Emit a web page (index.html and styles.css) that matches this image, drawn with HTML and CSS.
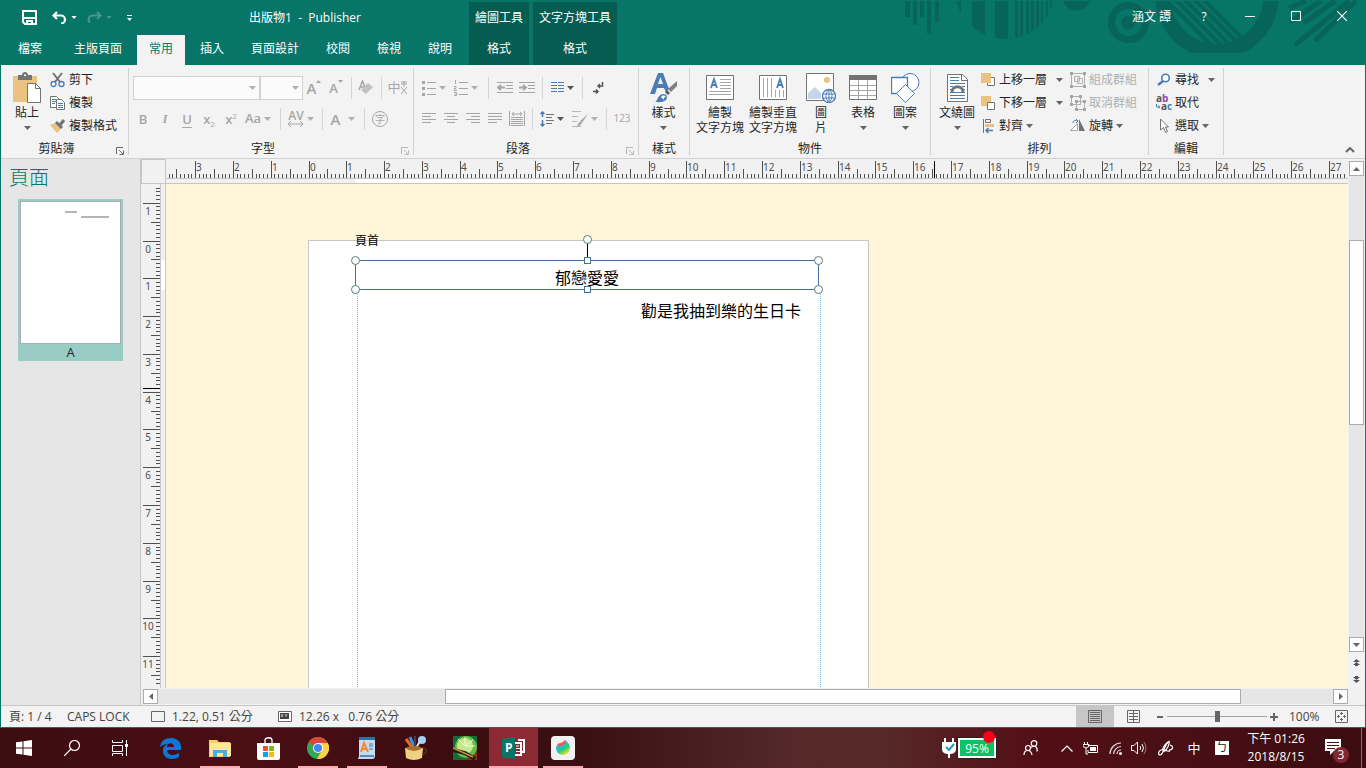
FILE: index.html
```html
<!DOCTYPE html>
<html lang="zh-Hant">
<head>
<meta charset="utf-8">
<title>出版物1 - Publisher</title>
<link rel="stylesheet" href="styles.css">
</head>
<body>
<svg class="defs" aria-hidden="true">
  <symbol id="caret" viewBox="0 0 7 4"><path d="M0 0h7L3.500 4z" fill="currentColor"/></symbol>
  <symbol id="launcher" viewBox="0 0 8 8"><path d="M.5 7V.5H7M3 3l4 4M7.500 3.500v4h-4" fill="none" stroke="currentColor"/></symbol>
</svg>
<div class="window">
  <header class="header">
    <svg class="pattern" viewBox="0 0 506 65" width="506" height="65" aria-hidden="true">
      <clipPath id="disc"><circle cx="146" cy="-11" r="50"/></clipPath>
      <clipPath id="bowl"><circle cx="358" cy="-3" r="47"/></clipPath>
      <clipPath id="flat"><rect x="290" y="1" width="140" height="52"/></clipPath>
      <path d="M46 1h5v16h-5zM54 1h4v24h-4zM61 1h4v16h-4zM68 1h4v33h-4zM76 1h4v21h-4z"/>
      <g clip-path="url(#disc)"><path d="M90 1h12v40H90zM113 1h13v40h-13zM136 1h13v40h-13zM156 1h3v40h-3zM161 1h3v40h-3zM167 1h3v40h-3zM172 1h3v40h-3zM177 1h3v40h-3zM182 1h2v40h-2zM187 1h2v40h-2zM191 1h2v40h-2zM195 1h2v40h-2z"/></g>
      <path d="M204 1a14 13 0 0 0 27 0z"/>
      <circle cx="269.500" cy="22.500" r="17" fill="none" stroke="#07645a" stroke-width="7"/><circle cx="269.500" cy="22.500" r="7"/>
      <g clip-path="url(#flat)"><circle cx="358" cy="-3" r="54" fill="none" stroke="#07645a" stroke-width="15"/>
      <g clip-path="url(#bowl)" stroke="#07645a" stroke-width="4"><path d="M307 0l55 55M317 0l55 55M326 0l55 55M336 0l55 55M345 0l50 50"/></g></g>
      <path d="M447 1L430 8M462 1L431 22M476 1L445 23M490 1L436 45M497 1L456 41" fill="none" stroke="#07645a" stroke-width="5"/>
    </svg>
    <div class="header-main">
      <div class="title-row">
        <div class="quick">
          <button aria-label="儲存"><svg width="15" height="15" viewBox="0 0 15 15"><path d="M1 1h13v13H3l-2-2zM1 8h13M5 14v-3h5v3" fill="none" stroke="#fff" stroke-width="2"/></svg></button>
          <button aria-label="復原"><svg width="15" height="13" viewBox="0 0 15 13"><path d="M5 1L1.500 4.500 5 8M2 4.500h7a4 4 0 0 1 0 8" fill="none" stroke="#fff" stroke-width="2.200"/></svg><svg class="caret"><use href="#caret"/></svg></button>
          <button class="faded" aria-label="重做"><svg width="15" height="13" viewBox="0 0 15 13"><path d="M10 1l3.500 3.500L10 8M13 4.500H6a4 4 0 0 0-3 7" fill="none" stroke="#fff" stroke-width="2"/></svg><svg class="caret"><use href="#caret"/></svg></button>
          <button aria-label="自訂快速存取"><svg width="5" height="6" viewBox="0 0 5 6"><path d="M0 0h5v1H0zM0 3h5L2.500 6z" fill="#fff"/></svg></button>
        </div>
        <h1 class="title">出版物1 &nbsp;- &nbsp;Publisher</h1>
      </div>
      <nav class="tabs">
        <button class="tab file">檔案</button><button class="tab">主版頁面</button><button class="tab active">常用</button><button class="tab">插入</button><button class="tab">頁面設計</button><button class="tab">校閱</button><button class="tab">檢視</button><button class="tab">說明</button>
      </nav>
    </div>
    <div class="context"><span>繪圖工具</span><button class="tab">格式</button></div>
    <div class="context wide"><span>文字方塊工具</span><button class="tab">格式</button></div>
    <div class="controls">
      <span class="user">涵文 譚</span>
      <button aria-label="說明">?</button>
      <button aria-label="最小化"><svg width="10" height="10"><path d="M0 5.500h10" stroke="#fff"/></svg></button>
      <button aria-label="最大化"><svg width="10" height="10"><path d="M.5.500h9v9h-9z" fill="none" stroke="#fff"/></svg></button>
      <button aria-label="關閉"><svg width="10" height="10"><path d="M0 0l10 10M10 0L0 10" stroke="#fff" stroke-width="1.200"/></svg></button>
    </div>
  </header>

  <section class="ribbon">
    <div class="group g-clip">
      <div class="group-body">
        <button class="big">
          <span class="pic"><svg width="28" height="32" viewBox="0 0 28 32"><path d="M0 4h24v26H0z" fill="#eac282"/><path d="M5 3h4c0-4 6-4 6 0h4v5H5z" fill="#737373"/><path d="M11 2.500h2v1.500h-2z" fill="#fff"/><path d="M14.500 11.500h8l5 5v14h-13z" fill="#fff" stroke="#737373"/><path d="M22.500 11.500v5h5" fill="none" stroke="#737373"/></svg></span>
          <span>貼上</span><svg class="caret"><use href="#caret"/></svg>
        </button>
        <div class="stack">
          <button><svg width="16" height="16" viewBox="0 0 16 16"><path d="M3 1l7 9M12 1L5 10" stroke="#737373" stroke-width="2"/><circle cx="3.500" cy="12" r="2.500" fill="none" stroke="#4a7db5" stroke-width="1.300"/><circle cx="11.500" cy="12" r="2.500" fill="none" stroke="#4a7db5" stroke-width="1.300"/></svg>剪下</button>
          <button><svg width="16" height="16" viewBox="0 0 16 16"><path d="M.5 1.500h6l2 2v9h-8z" fill="#fff" stroke="#737373"/><path d="M2 4.500h4M2 6.500h4M2 8.500h3" stroke="#4a7db5"/><path d="M6.500 4.500h5l3 3v7h-8z" fill="#fff" stroke="#737373"/><path d="M8 8.500h5M8 10.500h5M8 12.500h5" stroke="#4a7db5"/></svg>複製</button>
          <button><svg width="16" height="16" viewBox="0 0 16 16"><path d="M0 7l5-2 6 6-4 4z" fill="#eac282"/><path d="M6 4l6 6M10 7l4-5" stroke="#737373" stroke-width="3"/></svg>複製格式</button>
        </div>
      </div>
      <div class="group-label">剪貼簿<button class="launch" aria-label="剪貼簿設定"><svg width="8" height="8"><use href="#launcher"/></svg></button></div>
    </div>

    <div class="group g-font off">
      <div class="tools">
        <div class="row">
          <span class="combo font"><select aria-label="字型" disabled><option></option></select><svg class="caret"><use href="#caret"/></svg></span><span class="combo size"><select aria-label="字型大小" disabled><option></option></select><svg class="caret"><use href="#caret"/></svg></span>
          <button class="t22" aria-label="放大字型"><span class="l15">A</span><svg class="sup" width="5" height="3"><path d="M0 3h5L2.500 0z" fill="#a6a6a6"/></svg></button>
          <button class="t22" aria-label="縮小字型"><span class="l13">A</span><svg class="sup" width="5" height="3"><path d="M0 0h5L2.500 3z" fill="#a6a6a6"/></svg></button>
          <i class="bar"></i>
          <button class="t22" aria-label="清除格式"><svg width="16" height="16" viewBox="0 0 16 16"><path d="M1 10L4.500 1 8 10M2.500 7h4" fill="none" stroke="#a6a6a6" stroke-width="1.500"/><path d="M10 3l5 4-7 7-5-4z" fill="#c2c0c4"/></svg></button>
          <i class="bar"></i>
          <button class="t24" aria-label="中文版面配置"><span class="l12">中</span><svg width="6" height="14" viewBox="0 0 6 14"><path d="M0 1h6M0 3h6M3 0v6M0 6l6 7M6 6l-6 7" stroke="#a6a6a6" fill="none"/></svg></button>
        </div>
        <div class="row">
          <button class="t22 l13">B</button><button class="t22 l13 italic">I</button><button class="t22 l13 under">U</button>
          <button class="t22 l13">x<small class="sub">2</small></button><button class="t22 l13">x<small class="top">2</small></button>
          <button class="t32"><span class="aa">Aa</span><svg class="caret"><use href="#caret"/></svg></button>
          <i class="bar wide"></i>
          <button class="t30" aria-label="字元間距"><span class="av">AV<svg width="15" height="6" viewBox="0 0 15 6"><path d="M0 3h15M3 0L0 3l3 3M12 0l3 3-3 3" fill="none" stroke="#a6a6a6"/></svg></span><svg class="caret"><use href="#caret"/></svg></button>
          <i class="bar wide"></i>
          <button class="t30 spread" aria-label="字型色彩"><span class="l15">A</span><svg class="caret"><use href="#caret"/></svg></button>
          <i class="bar wide"></i>
          <button class="t20" aria-label="圍繞字元"><span class="ring">字</span></button>
        </div>
      </div>
      <div class="group-label">字型<button class="launch" aria-label="字型設定"><svg width="8" height="8"><use href="#launcher"/></svg></button></div>
    </div>

    <div class="group g-para off">
      <div class="tools">
        <div class="row">
          <button class="t32" aria-label="項目符號"><svg width="14" height="16" viewBox="0 0 14 16"><path d="M5 2.500h9M5 8.500h9M5 14.500h9" stroke="#a6a6a6"/><path d="M0 1h3v3H0zM0 7h3v3H0zM0 13h3v3H0z" fill="#a6a6a6"/></svg><svg class="caret"><use href="#caret"/></svg></button>
          <button class="t32" aria-label="編號"><svg width="14" height="16" viewBox="0 0 14 16"><path d="M5 2.500h9M5 8.500h9M5 14.500h9M1.500 0v4M0 6.500h2v2H.5v2H3M0 12.500h2.500v3H0M1 14h1" fill="none" stroke="#a6a6a6"/></svg><svg class="caret"><use href="#caret"/></svg></button>
          <i class="bar wide"></i>
          <button class="t22" aria-label="減少縮排"><svg width="16" height="12" viewBox="0 0 16 12"><path d="M0 .5h16M9 3.500h7M9 6.500h7M0 10.500h16" stroke="#a6a6a6"/><path d="M8 5.500H2M4 3L1 5.500 4 8" fill="none" stroke="#a6a6a6" stroke-width="2"/></svg></button>
          <button class="t22" aria-label="增加縮排"><svg width="16" height="12" viewBox="0 0 16 12"><path d="M0 .5h16M9 3.500h7M9 6.500h7M0 10.500h16" stroke="#a6a6a6"/><path d="M0 5.500h6M4 3l3 2.500L4 8" fill="none" stroke="#a6a6a6" stroke-width="2"/></svg></button>
          <i class="bar"></i>
          <button class="t32 on" aria-label="欄"><svg width="13" height="11" viewBox="0 0 13 11"><path d="M0 .5h6M7 .5h6M0 3.500h6M7 3.500h6M0 6.500h6M7 6.500h6M0 9.500h6M7 9.500h6" stroke="#4a7db5"/></svg><svg class="caret"><use href="#caret"/></svg></button>
          <i class="bar"></i>
          <button class="t24 on" aria-label="段落標記"><svg width="11" height="12" viewBox="0 0 11 12"><path d="M9.500 0v4H5M7 2L5 4l2 2M0 9.500h5M3 7.500l2 2-2 2" fill="none" stroke="#555" stroke-width="1.500"/></svg></button>
        </div>
        <div class="row">
          <button class="t22" aria-label="靠左"><svg width="14" height="11"><path d="M0 .5h14M0 3.500h9M0 6.500h14M0 9.500h9" stroke="#a6a6a6"/></svg></button>
          <button class="t22" aria-label="置中"><svg width="14" height="11"><path d="M0 .5h14M3 3.500h8M0 6.500h14M3 9.500h8" stroke="#a6a6a6"/></svg></button>
          <button class="t22" aria-label="靠右"><svg width="14" height="11"><path d="M0 .5h14M5 3.500h9M0 6.500h14M5 9.500h9" stroke="#a6a6a6"/></svg></button>
          <button class="t22" aria-label="左右對齊"><svg width="14" height="11"><path d="M0 .5h14M0 3.500h14M0 6.500h14M0 9.500h9" stroke="#a6a6a6"/></svg></button>
          <button class="t22" aria-label="分散對齊"><svg width="16" height="16" viewBox="0 0 16 16"><path d="M.5 0v15M15.500 0v15M2 6.500h12M2 8.500h12M2 10.500h12M2 12.500h12M2 14.500h12M3 3h10M5 1L3 3l2 2M11 1l2 2-2 2" fill="none" stroke="#a6a6a6"/></svg></button>
          <i class="bar"></i>
          <button class="t32 on" aria-label="行距"><svg width="14" height="16" viewBox="0 0 14 16"><path d="M2.500 1v5M.5 3l2-2 2 2M2.500 9v6M.5 13l2 2 2-2" fill="none" stroke="#4a7db5" stroke-width="1.500"/><path d="M6 3.500h8M6 6.500h6M6 9.500h8M6 12.500h6" stroke="#737373"/></svg><svg class="caret"><use href="#caret"/></svg></button>
          <button class="t34" aria-label="段落樣式"><svg width="16" height="16" viewBox="0 0 16 16"><path d="M0 .5h9M0 5.500h6M0 10.500h5M0 15.500h9" stroke="#b8b8b8"/><path d="M16 3l-6 9-2-2z" fill="#aaa"/><path d="M5 15c1 0 1-5 4-4 2 2-1 4-4 4z" fill="#aaa"/></svg><svg class="caret"><use href="#caret"/></svg></button>
          <i class="bar"></i>
          <button class="t24 num">123</button>
        </div>
      </div>
      <div class="group-label">段落<button class="launch" aria-label="段落設定"><svg width="8" height="8"><use href="#launcher"/></svg></button></div>
    </div>

    <div class="group g-style">
      <div class="group-body">
        <button class="big">
          <span class="pic"><svg width="28" height="30" viewBox="0 0 28 30"><path d="M0 21L8 0h5l6 16-3 3-2-4H7l-2 6zM8 11h5l-2.500-7z" fill="#4a7db5"/><path d="M27 8v5l-6 6-3-3z" fill="#808080"/><path d="M17 17l3 3-2 2-3-3z" fill="#555"/><path d="M5 29c3-1 2-7 8-8 4 0 5 3 3 6-3 3-8 2-11 2z" fill="#4a7db5"/><path d="M11 24c1-2 4-2 5 0-2 0-3 2-2 3" fill="#fff"/></svg></span>
          <span>樣式</span><svg class="caret"><use href="#caret"/></svg>
        </button>
      </div>
      <div class="group-label">樣式</div>
    </div>

    <div class="group g-obj">
      <div class="group-body">
        <button class="big w52"><span class="pic"><svg width="28" height="25" viewBox="0 0 28 25"><path d="M.5.500h27v24H.5z" fill="#fff" stroke="#737373"/><path d="M5 13L8 4l3 9M6 10h4" fill="none" stroke="#4a7db5" stroke-width="1.800"/><path d="M14 4.500h11M14 7.500h11M14 10.500h11M14 13.500h11M3 16.500h22M3 19.500h22" stroke="#a6a6a6"/></svg></span><span>繪製<br>文字方塊</span></button>
        <button class="big w54"><span class="pic"><svg width="28" height="25" viewBox="0 0 28 25"><path d="M.5.500h27v24H.5z" fill="#fff" stroke="#737373"/><path d="M18 13l3-9 3 9M19 10h4" fill="none" stroke="#4a7db5" stroke-width="1.800"/><path d="M4.500 3v19M8.500 3v19M12.500 3v19M16.500 15v7M20.500 15v7M24.500 15v7" stroke="#a6a6a6"/></svg></span><span>繪製垂直<br>文字方塊</span></button>
        <button class="big w42"><span class="pic"><svg width="30" height="30" viewBox="0 0 30 30"><path d="M.5.500h27v27H.5z" fill="#fff" stroke="#737373"/><circle cx="21" cy="7" r="3" fill="#eac282"/><path d="M2 26v-6l7-6 6 6v6z" fill="#c5d6ea"/><circle cx="23" cy="23" r="6.500" fill="#fff" stroke="#4a7db5" stroke-width="1.300"/><path d="M16 21h13M16 25h13M23 16v14M23 16c-4 4-4 9 0 14M23 16c4 4 4 9 0 14" fill="none" stroke="#4a7db5"/></svg></span><span>圖<br>片</span></button>
        <button class="big w42"><span class="pic"><svg width="28" height="25" viewBox="0 0 28 25"><path d="M.5.500h27v24H.5z" fill="#fff" stroke="#737373"/><path d="M0 0h28v5H0z" fill="#737373"/><path d="M1 10.500h26M1 15.500h26M1 20.500h26M9.500 5v19M18.500 5v19" stroke="#a6a6a6"/></svg></span><span>表格</span><svg class="caret"><use href="#caret"/></svg></button>
        <button class="big w42"><span class="pic"><svg width="29" height="30" viewBox="0 0 29 30"><circle cx="19" cy="9.500" r="9" fill="#fff" stroke="#4a7db5"/><path d="M.5 4.500h16v16H.5z" fill="#fff" stroke="#4a7db5" stroke-width="1.300"/><path d="M14.500 11.500l9 9-9 9-9-9z" fill="#fff" stroke="#4a7db5"/></svg></span><span>圖案</span><svg class="caret"><use href="#caret"/></svg></button>
      </div>
      <div class="group-label">物件</div>
    </div>

    <div class="group g-arr">
      <div class="group-body">
        <button class="big"><span class="pic"><svg width="21" height="28" viewBox="0 0 21 28"><path d="M.5.500h15l5 5v22H.5z" fill="#fff" stroke="#737373"/><path d="M14.500.500v6h6" fill="none" stroke="#737373"/><path d="M3 3.500h9M3 6.500h9M3 9.500h15M3 12.500h3M15 12.500h3M3 15.500h2M16 15.500h2M3 18.500h15M3 21.500h15M3 24.500h15" stroke="#4a7db5"/><path d="M5 18c0-7 11-7 11 0" fill="none" stroke="#737373" stroke-width="3"/></svg></span><span>文繞圖</span><svg class="caret"><use href="#caret"/></svg></button>
        <div class="stack w90">
          <button class="far"><svg width="16" height="16" viewBox="0 0 16 16"><path d="M7.500 5.500h7v8h-7z" fill="#fff" stroke="#737373"/><path d="M1 1h10v10H1z" fill="#eac282"/></svg>上移一層<svg class="caret"><use href="#caret"/></svg></button>
          <button class="far"><svg width="16" height="16" viewBox="0 0 16 16"><path d="M1 1h10v10H1z" fill="#eac282"/><path d="M7.500 7.500h7v7h-7z" fill="#fff" stroke="#737373"/></svg>下移一層<svg class="caret"><use href="#caret"/></svg></button>
          <button><svg width="16" height="16" viewBox="0 0 16 16"><path d="M3.500 1v14M5.500 1.500h5v3h-5z" fill="none" stroke="#737373"/><path d="M5 6h9v3H5z" fill="#eac282"/><path d="M13 12.500H6M8.500 10L6 12.500 8.500 15" fill="none" stroke="#4a7db5" stroke-width="1.500"/></svg>對齊<svg class="caret"><use href="#caret"/></svg></button>
        </div>
        <div class="stack">
          <button class="off" disabled><svg width="16" height="16" viewBox="0 0 16 16"><path d="M1.500 2v12.500h13V1.500H2M4.500 4.500h5v5h-5zM7.500 6.500h5v5h-5z" fill="none" stroke="#b0b0b0"/><path d="M0 0h3v3H0zM13 0h3v3h-3zM0 13h3v3H0zM13 13h3v3h-3z" fill="#a6a6a6"/></svg>組成群組</button>
          <button class="off" disabled><svg width="16" height="16" viewBox="0 0 16 16"><path d="M1.500 1.500h9v8h-9zM6.500 6.500h8v8h-8z" fill="none" stroke="#b0b0b0"/><path d="M0 0h3v3H0zM9 0h3v3H9zM0 8h3v3H0zM5 5h3v3H5zM13 5h3v3h-3zM5 13h3v3H5zM13 13h3v3h-3z" fill="#a6a6a6"/></svg>取消群組</button>
          <button><svg width="16" height="16" viewBox="0 0 16 16"><path d="M.5 12.500h7v-7z" fill="#fff" stroke="#a6a6a6"/><path d="M9 1v12h6z" fill="#737373"/><path d="M3 5c0-3 4-3 5-2M6 1l2 2-2 2" fill="none" stroke="#4a7db5"/></svg>旋轉<svg class="caret"><use href="#caret"/></svg></button>
        </div>
      </div>
      <div class="group-label">排列</div>
    </div>

    <div class="group g-edit">
      <div class="group-body">
        <div class="stack">
          <button class="far"><svg width="16" height="16" viewBox="0 0 16 16"><circle cx="9.500" cy="6" r="3.800" fill="#fff" stroke="#4a7db5" stroke-width="1.600"/><path d="M7 9l-5 4" stroke="#4a7db5" stroke-width="2.500"/></svg>尋找<svg class="caret"><use href="#caret"/></svg></button>
          <button><svg class="abac" width="16" height="16" viewBox="0 0 16 16"><text x="0" y="7">a<tspan fill="#8a4bab">b</tspan></text><text x="5" y="15">a<tspan fill="#4a7db5">c</tspan></text><path d="M.5 9v3H4M2.500 10.500L4 12l-1.500 1.500" fill="none" stroke="#4a7db5"/></svg>取代</button>
          <button><svg width="16" height="16" viewBox="0 0 16 16"><path d="M4.500 1v11l3-2.500 2 5 2-1-2-4.500h3z" fill="#fff" stroke="#737373"/></svg>選取<svg class="caret"><use href="#caret"/></svg></button>
        </div>
      </div>
      <div class="group-label">編輯</div>
    </div>
    <button class="collapse" aria-label="摺疊功能區"><svg width="10" height="6" viewBox="0 0 10 6"><path d="M1 5l4-4 4 4" fill="none" stroke="#666" stroke-width="2"/></svg></button>
  </section>

  <main class="work">
    <aside class="pages">
      <h2>頁面</h2>
      <button class="thumb"><span class="sheet"><i class="line short"></i><i class="line long"></i></span>A</button>
    </aside>
    <div class="editor">
      <div class="corner"></div>
      <svg class="ruler-h" id="rulerH" aria-label="水平尺規"></svg>
      <svg class="ruler-v" id="rulerV" aria-label="垂直尺規"></svg>
      <div class="canvas">
        <div class="paper"></div>
        <i class="guide left"></i><i class="guide right"></i>
        <span class="head-note">頁首</span>
        <div class="frame">郁戀愛愛
          <i class="stem"></i><i class="knob rot"></i><i class="knob tl"></i><i class="knob tr"></i><i class="knob bl"></i><i class="knob br"></i><i class="node up"></i><i class="node down"></i>
        </div>
        <div class="frame-text">勸是我抽到樂的生日卡</div>
      </div>
      <div class="vscroll">
        <button class="arrow" aria-label="向上"><svg width="7" height="4"><path d="M0 4h7L3.500 0z" fill="#666"/></svg></button>
        <div class="track"><i class="before"></i><i class="handle"></i><i class="after"></i></div>
        <button class="arrow" aria-label="向下"><svg width="7" height="4"><path d="M0 0h7L3.500 4z" fill="#666"/></svg></button>
        <button class="jump" aria-label="上一頁"><svg width="7" height="7"><path d="M0 3h7L3.500 0zM0 6h7L3.500 3zM2 6h3v1H2z" fill="#555"/></svg></button>
        <button class="jump" aria-label="下一頁"><svg width="7" height="7"><path d="M2 0h3v1H2zM0 1h7L3.500 4zM0 4h7L3.500 7z" fill="#555"/></svg></button>
      </div>
      <div class="hscroll">
        <button class="arrow" aria-label="向左"><svg width="4" height="7"><path d="M4 0v7L0 3.500z" fill="#666"/></svg></button>
        <div class="track"><i class="before"></i><i class="handle"></i><i class="after"></i></div>
        <button class="arrow" aria-label="向右"><svg width="4" height="7"><path d="M0 0v7l4-3.500z" fill="#666"/></svg></button>
      </div>
    </div>
  </main>

  <footer class="status">
    <span class="s-page">頁: 1 / 4</span><span class="s-caps">CAPS LOCK</span>
    <span class="s-pos"><svg width="14" height="11"><path d="M.5.500h13v10H.5z" fill="none" stroke="#666"/></svg>1.22, 0.51 公分</span>
    <span class="s-size"><svg width="14" height="11"><path d="M.5.500h13v10H.5z" fill="#fff" stroke="#666"/><path d="M2 2h9v6H2z" fill="#444"/><path d="M3 3l2 3M5 3L3 6M7 3l1 1.500L9.500 3M8 4v2" stroke="#ddd" stroke-width=".7" fill="none"/></svg>12.26 x &nbsp; 0.76 公分</span>
    <div class="views">
      <button class="view active" aria-label="單頁"><svg width="14" height="13"><path d="M.5.500h13v12H.5z" fill="none" stroke="#666"/><path d="M2 2.500h10M2 4.500h10M2 6.500h10M2 8.500h10M2 10.500h10" stroke="#666"/></svg></button>
      <button class="view" aria-label="雙頁"><svg width="13" height="13"><path d="M.5.500h12v12H.5zM6.500 1v12M2 3.500h9M2 6.500h9M2 9.500h9" fill="none" stroke="#666"/></svg></button>
      <button class="zoom-btn" aria-label="縮小"><svg width="6" height="2"><path d="M0 0h6v2H0z" fill="#666"/></svg></button>
      <input type="range" aria-label="縮放" min="0" max="100" value="50">
      <button class="zoom-btn" aria-label="放大"><svg width="8" height="8"><path d="M0 3h8v2H0zM3 0h2v8H3z" fill="#666"/></svg></button>
      <span class="pct">100%</span>
      <button class="fit" aria-label="整頁"><svg width="13" height="13"><path d="M.5.500h12v12H.5z" fill="none" stroke="#666"/><path d="M6.500 2v3M6.500 8v3M2 6.500h3M8 6.500h3M5 3.500h3M5 9.500h3M3.500 5v3M9.500 5v3" stroke="#666"/></svg></button>
    </div>
  </footer>
</div>

<div class="taskbar">
  <button class="task sys" aria-label="開始"><svg width="16" height="16" viewBox="0 0 16 16"><path d="M0 2.300L6.500 1.400v6.100H0zM7.500 1.200L16 0v7.500H7.500zM0 8.500h6.500v6.100L0 13.700zM7.500 8.500H16V16l-8.500-1.200z" fill="#fff"/></svg></button>
  <button class="task sys" aria-label="搜尋"><svg width="16" height="16" viewBox="0 0 16 16"><circle cx="10.500" cy="5.500" r="5" fill="none" stroke="#fff" stroke-width="1.200"/><path d="M7 9L0 16" stroke="#fff" stroke-width="1.200"/></svg></button>
  <button class="task sys" aria-label="工作檢視"><svg width="16" height="16" viewBox="0 0 16 16"><path d="M.5 0v2.500h10V0M.5 5.500h10v6H.5zM.5 16v-2.500h10V16M14.500 0v16" fill="none" stroke="#fff"/><path d="M13 4h3v3h-3z" fill="#fff"/></svg></button>
  <button class="task first" aria-label="Edge"><svg width="21" height="21" viewBox="0 0 21 21"><path d="M0 9C1 3 5 0 11 0c6 0 10 4 10 9v3H7c0 6 8 6 12 3v4c-7 4-16 2-16-6 0-4 2-6 5-7C5 6 2 7 0 9zm7 0h7c0-5-7-5-7 0z" fill="#0a78d7"/></svg></button>
  <button class="task open" aria-label="檔案總管"><svg width="22" height="19" viewBox="0 0 22 19"><path d="M0 1h8l2 2h11v15H0z" fill="#f5cf60"/><path d="M1 4h21v13H1z" fill="#ffe69a"/><path d="M4 18v-7h14v7h-4v-4H8v4z" fill="#3fb1e3"/></svg></button>
  <button class="task" aria-label="Store"><svg width="23" height="23" viewBox="0 0 23 23"><path d="M8 6V3c0-3 7-3 7 0v3" fill="none" stroke="#fff" stroke-width="1.300"/><path d="M0 6h23v15q0 2-2 2H2q-2 0-2-2z" fill="#fff"/><path d="M6 9h5v5H6z" fill="#f35325"/><path d="M12 9h5v5h-5z" fill="#81bc06"/><path d="M6 15h5v5H6z" fill="#05a6f0"/><path d="M12 15h5v5h-5z" fill="#ffba08"/></svg></button>
  <button class="task open" aria-label="Chrome"><svg width="22" height="22" viewBox="0 0 22 22"><circle cx="11" cy="11" r="11" fill="#35a853"/><path d="M11 11L1.500 5.500A11 11 0 0 1 20.500 5.500z" fill="#e0453a"/><path d="M11 6h9.800A11 11 0 0 1 10 22l5-9z" fill="#fdd143"/><circle cx="11" cy="11" r="5" fill="#fff"/><circle cx="11" cy="11" r="4" fill="#4385f4"/></svg></button>
  <button class="task open" aria-label="WordPad"><svg width="18" height="22" viewBox="0 0 18 22"><path d="M1 1h16v18q0 3-3 3H0l1-3z" fill="#c4dcef"/><path d="M1 0h16v3H1z" fill="#31709f"/><path d="M3 15L6 6l4 9M4 12h5" fill="none" stroke="#ee8931" stroke-width="2"/><path d="M11 7h4M11 9h4M11 12h4" stroke="#4776a1"/><path d="M2 19h14" stroke="#5a8db5" stroke-width="2"/></svg></button>
  <button class="task" aria-label="小畫家"><svg width="24" height="24" viewBox="0 0 24 24"><circle cx="18" cy="4" r="4" fill="#9fd2f7"/><path d="M2 3l8 11" stroke="#de692b" stroke-width="3"/><path d="M6 1l5 12" stroke="#4d8ccc" stroke-width="3"/><path d="M11 0v13" stroke="#3a3f5c" stroke-width="2"/><path d="M16 5l-5 9" stroke="#ddd" stroke-width="2"/><ellipse cx="10" cy="13" rx="9" ry="3" fill="#a8722c"/><path d="M1 12q9 6 18 0l-1 10q-8 4-16 0z" fill="#efcf83"/><path d="M19 12c5 0 4 7-1 6" fill="none" stroke="#655238"/></svg></button>
  <button class="task" aria-label="PaintTool"><svg width="24" height="24" viewBox="0 0 24 24"><path d="M0 0h24v24H0z" fill="#176b37"/><path d="M12 24h12V8z" fill="#8c3020"/><circle cx="13" cy="11" r="11" fill="#60bd4b"/><circle cx="12" cy="10" r="8" fill="#c6e88e"/><path d="M12 10l8-6M12 10L5 3M12 10v-9M12 10h10" stroke="#f6ffd0"/><path d="M0 14l12 3 10 6" stroke="#2c1a0d" stroke-width="4" fill="none"/><path d="M0 12l20 9" stroke="#c99245" stroke-width="1.500"/></svg></button>
  <button class="task open current" aria-label="Publisher"><svg width="24" height="22" viewBox="0 0 24 22"><path d="M13 6h6v12h-6M16 3h6v12h-2" fill="none" stroke="#fff" stroke-width="2"/><path d="M14 9h3M14 11.500h5M14 14.500h5" stroke="#fff"/><path d="M0 2l13-2v22L0 20z" fill="#077568"/></svg><b>P</b></button>
  <button class="task open" aria-label="MediBang"><svg width="24" height="24" viewBox="0 0 24 24"><defs><linearGradient id="drop" x1="0" y1="0" x2=".6" y2="1"><stop offset=".15" stop-color="#fb3b45"/><stop offset=".4" stop-color="#29b6e8"/><stop offset=".7" stop-color="#29cf76"/><stop offset="1" stop-color="#eee22f"/></linearGradient></defs><rect width="24" height="24" rx="4" fill="#f2f2f2"/><path d="M14 4c3 2 5 5 5 8a7 7 0 0 1-14 0c0-4 6-3 9-8z" fill="url(#drop)"/><path d="M6 9c1-3 6-1 8-5 1 4-2 7-8 5z" fill="#fb553d"/></svg></button>
  <div class="tray">
    <span class="power"><svg width="16" height="20" viewBox="0 0 16 20"><path d="M3 0h2v4h6V0h2v4h2v8q-1 4-6 4v4H7v-4q-5 0-6-4V4h2z" fill="#fff"/><path d="M5 9l3 3 5-6" fill="none" stroke="#259ac4" stroke-width="2"/></svg><span class="cell">95%<i></i></span></span>
    <button class="tr w-people" aria-label="連絡人"><svg width="16" height="16" viewBox="0 0 16 16"><g fill="none" stroke="#fff" stroke-width="1.200"><circle cx="5" cy="8" r="2.500"/><circle cx="11" cy="3.500" r="2.800"/><path d="M1 15c0-6 7-6 8 0M8 7.500c3-3 7-1 6 4"/></g></svg></button>
    <button class="tr" aria-label="顯示隱藏的圖示"><svg width="12" height="7" viewBox="0 0 12 7"><path d="M.5 6.500L6 1l5.500 5.500" fill="none" stroke="#fff" stroke-width="1.200"/></svg></button>
    <button class="tr" aria-label="電池"><svg width="16" height="13" viewBox="0 0 16 13"><path d="M5 3.500h9.500v7H5V8M1.500 0v2M4.500 0v2M0 2.500h6v2q-3 3-6 0zM3 6v6h2" fill="none" stroke="#fff"/><path d="M7 5h6v4H7z" fill="#fff"/></svg></button>
    <button class="tr" aria-label="網路"><svg width="13" height="13" viewBox="0 0 13 13"><path d="M1 12C1 6 6 1 12 1M4.500 12A8 8 0 0 1 12 4.500M8 12a4 4 0 0 1 4-4" fill="none" stroke="#ddd" stroke-width="1.200"/><circle cx="11.500" cy="11.500" r="1.500" fill="#fff"/></svg></button>
    <button class="tr" aria-label="音量"><svg width="17" height="14" viewBox="0 0 17 14"><path d="M.5 4.500H3L6.500 1v12L3 9.500H.5z" fill="none" stroke="#fff"/><path d="M9 5q1.500 2 0 4M11 3q3 4 0 8" fill="none" stroke="#fff"/><path d="M13 1q4 6 0 12" fill="none" stroke="#99787a"/></svg></button>
    <button class="tr pen" aria-label="筆"><svg width="16" height="16" viewBox="0 0 16 16"><path d="M12 1c-4 1-8 7-7 10 1 2 5-3 6-7 1-3-2-2-4 3-2 6-3 8-5 8s-2-4 1-5 6 2 9 1M12 5c4 1 3 5-1 5" fill="none" stroke="#fff" stroke-width="1.200"/></svg></button>
    <button class="tr ime">中</button>
    <button class="tr ime"><span>ㄅ</span></button>
    <button class="clock"><span>下午 01:26</span><span>2018/8/15</span></button>
    <button class="notice" aria-label="通知"><svg width="16" height="16" viewBox="0 0 16 16"><path d="M0 0h16v12h-7l-4 4v-4H0z" fill="#fff"/><path d="M2 3.500h12M2 6.500h12M2 9.500h8" stroke="#4b0f14"/></svg><span class="badge">3</span></button>
    <i class="peek"></i>
  </div>
</div>
<script src="ruler.js"></script>
</body>
</html>
```

FILE: styles.css
```css
* { box-sizing: border-box; }
body {
  margin: 0;
  height: 100vh;
  display: flex;
  flex-direction: column;
  overflow: hidden;
  font: 12px/15px "Open Sans", "Noto Sans CJK TC", sans-serif;
  color: #262626;
}
button { margin: 0; padding: 0; border: 0; background: none; font: inherit; color: inherit; white-space: nowrap; }
h1, h2 { margin: 0; font-weight: 400; }
svg { flex: none; }
.defs { position: absolute; width: 0; height: 0; }
.caret { width: 7px; height: 4px; color: #666; }

.window { flex: 1; min-height: 0; display: flex; flex-direction: column; border: 1px solid #077568; border-top: 0; }

/* title bar and tabs */
.header { position: relative; display: flex; height: 65px; flex: none; background: #077568; color: #fff; }
.pattern { position: absolute; right: 0; top: 0; fill: #07645a; }
.header-main { width: 468px; display: flex; flex-direction: column; }
.title-row { flex: 1; display: flex; align-items: center; }
.quick { width: 140px; padding-left: 21px; display: flex; align-items: center; gap: 15px; }
.quick button { display: flex; align-items: center; gap: 4px; }
.quick .caret { width: 6px; height: 3px; color: #fff; }
.quick .faded { opacity: .25; margin-left: -5px; }
.title { flex: 1; text-align: center; font-size: 12px; }
.tabs { display: flex; gap: 3px; }
.tab { height: 30px; padding: 0 12px 3px; }
.tab.file { padding: 0 17px 3px; }
.tab.active { background: #f3f3f3; color: #077568; }
.context { width: 60px; margin-right: 4px; margin-top: 2px; display: flex; flex-direction: column; justify-content: space-between; align-items: center; background: #055d52; }
.context.wide { width: 84px; }
.context span { padding-top: 8px; }
.controls { position: relative; margin-left: auto; display: flex; height: 32px; align-items: center; }
.controls button { width: 46px; height: 32px; display: flex; align-items: center; justify-content: center; }
.user { padding-right: 10px; }

/* ribbon */
.ribbon { display: flex; flex: none; height: 94px; padding: 3px 0; background: #f3f3f3; border-bottom: 1px solid #d0d0d0; }
.group { display: flex; flex-direction: column; border-right: 1px solid #d2d2d2; flex: none; }
.g-clip { width: 128px; }
.g-font { width: 285px; }
.g-para { width: 225px; }
.g-style { width: 51px; }
.g-obj { width: 241px; }
.g-arr { width: 218px; }
.g-edit { width: 75px; }
.g-obj .group-body { padding-left: 4px; }
.g-edit .group-body { padding-left: 7px; }
.g-clip .big, .g-arr .big { padding-left: 3px; }
.group-body { flex: 1; display: flex; }
.group-label { position: relative; height: 14px; text-align: center; padding-right: 16px; color: #262626; }
.g-style .group-label, .g-obj .group-label, .g-arr .group-label, .g-edit .group-label { padding-right: 0; }
.launch { position: absolute; right: 4px; bottom: 0; height: 8px; display: flex; color: #666; }
.off .launch { color: #b8b8b8; }
.big { width: 49px; padding-top: 2px; display: flex; flex-direction: column; align-items: center; }
.big .pic { height: 35px; display: flex; align-items: center; }
.big .caret { margin-top: 6px; }
.w52 { width: 52px; }
.w54 { width: 54px; }
.w42 { width: 42px; }
.stack { display: flex; flex-direction: column; }
.stack.w90 { width: 90px; }
.stack button { height: 23px; display: flex; align-items: center; gap: 3px; }
.stack button.off { color: #b0b0b0; }
.far .caret { margin-left: 6px; }
.abac { font: bold 10px "Open Sans", sans-serif; fill: #555; overflow: visible; }

.tools { flex: 1; padding: 4px 0 0 4px; }
.g-font .tools { padding-left: 3px; }
.row { height: 31px; display: flex; align-items: center; }
.row button { height: 22px; display: flex; align-items: center; justify-content: center; color: #a6a6a6; }
.row .caret, .off .caret { color: #b0b0b0; }
.row .on .caret { color: #555; }
.t20 { width: 20px; }
.t22 { width: 22px; }
.t24 { width: 24px; }
.t30 { width: 30px; }
.t32 { width: 32px; }
.t34 { width: 34px; }
.t32, .t34, .t30 { gap: 3px; }
.row .spread { gap: 8px; }
.bar { width: 8px; height: 22px; background: linear-gradient(#d5d5d5, #d5d5d5) center / 1px 100% no-repeat; }
.bar.wide { width: 12px; }
.combo { position: relative; height: 24px; }
.combo.font { width: 127px; margin-left: 1px; }
.combo.size { width: 43px; }
.combo select { appearance: none; width: 100%; height: 24px; background: #fff; border: 1px solid #c6c6c6; border-radius: 0; }
.combo .caret { position: absolute; right: 4px; top: 10px; width: 7px; }
.l15 { font: 600 15px/20px "Open Sans", sans-serif; }
.row .l13 { font: 600 13px/18px "Open Sans", sans-serif; }
.l12 { font-size: 13px; }
.sup { align-self: flex-start; margin-top: 3px; }
.row .italic { font-style: italic; font-family: "Liberation Serif", serif; }
.row .under { text-decoration: underline; text-underline-offset: 3px; }
.sub, .top { font: 8px/8px "Open Sans", sans-serif; }
.sub { align-self: flex-end; margin-bottom: 2px; }
.top { align-self: flex-start; margin-top: 4px; }
.aa { font-size: 13px; font-weight: 600; }
.av { display: flex; flex-direction: column; align-items: center; font: 600 12px/10px "Open Sans", sans-serif; }
.ring { width: 16px; height: 16px; border: 1px solid #a6a6a6; border-radius: 50%; font-size: 10px; line-height: 14px; }
.num { font-size: 10px; }
.collapse { align-self: flex-end; margin: 0 10px 2px auto; display: flex; }

/* workspace */
.work { flex: 1; min-height: 0; display: flex; }
.pages { width: 140px; flex: none; background: #e6e6e6; border-right: 1px solid #c6c6c6; }
.pages h2 { padding: 5px 0 0 8px; height: 40px; font-size: 20px; line-height: 28px; color: #077568; font-weight: 300; }
.thumb { width: 105px; height: 162px; margin-left: 17px; padding-top: 2px; background: #9accc6; display: flex; flex-direction: column; align-items: center; font-size: 13px; line-height: 17px; }
.sheet { width: 101px; height: 143px; background: #fff; border: 1px solid #a9acb0; display: flex; flex-direction: column; padding-top: 9px; }
.line { height: 2px; background: #b5b5b5; }
.line.short { width: 12px; margin-left: 44px; }
.line.long { width: 28px; margin: 3px 0 0 60px; }
.editor { flex: 1; min-width: 0; display: grid; grid-template: 25px minmax(0, 1fr) 17px / 25px minmax(0, 1fr) 17px; background: #f1f1f1; }
.corner { border: 1px solid #c6c6c6; }
.ruler-h, .ruler-v { width: 100%; height: 100%; font: 10px "Noto Sans", sans-serif; }
.canvas { position: relative; overflow: hidden; background: #fff6da; }
.vscroll { grid-column: 3; grid-row: 1 / 3; padding: 2px 1px 1px; display: flex; flex-direction: column; }
.hscroll { grid-column: 1 / 3; grid-row: 3; padding: 1px 0 1px 2px; display: flex; }
.arrow { width: 15px; height: 15px; flex: none; display: flex; align-items: center; justify-content: center; background: #fff; border: 1px solid #ababab; }
.jump { height: 16px; margin-top: 1px; display: flex; align-items: center; justify-content: center; background: #f3f3f3; }
.arrow + .jump { margin-top: 2px; }
.track { flex: 1; display: flex; background: #e6e6e6; }
.vscroll .track { flex-direction: column; }
.handle { background: #fff; border: 1px solid #ababab; }
.vscroll .before { flex: 64; }
.vscroll .handle { flex: 184; }
.vscroll .after { flex: 213; }
.hscroll .before { flex: 287; }
.hscroll .handle { flex: 796; }
.hscroll .after { flex: 92; }

/* objects placed on the free canvas */
.paper { position: absolute; left: 142px; top: 56px; width: 561px; height: 794px; background: #fff; border: 1px solid #c6c6c6; }
.guide { position: absolute; top: 106px; width: 1px; height: 690px; background: repeating-linear-gradient(#4fc0dc 0 1px, #fff 1px 2px); }
.guide.left { left: 191px; }
.guide.right { left: 654px; }
.head-note { position: absolute; left: 189px; top: 49px; color: #000; }
.frame { position: absolute; left: 189px; top: 76px; width: 464px; height: 30px; border: 1px solid #41719c; text-align: center; font-size: 16px; line-height: 35px; color: #000; }
.frame-text { position: absolute; left: 475px; top: 115px; font-size: 16px; line-height: 24px; color: #000; }
.knob, .node, .stem { position: absolute; background: #fff; }
.knob { width: 9px; height: 9px; border: 1px solid #5d7c7c; border-radius: 50%; }
.tl { left: -5px; top: -5px; }
.knob.tr { right: -5px; top: -5px; }
.bl { left: -5px; bottom: -5px; }
.br { right: -5px; bottom: -5px; }
.rot { left: 227px; top: -26px; }
.stem { left: 231px; top: -18px; width: 1px; height: 17px; background: #000; }
.node { width: 7px; height: 7px; left: 228px; border: 1px solid #41719c; }
.up { top: -4px; }
.down { bottom: -4px; }

/* status bar */
.status { flex: none; height: 22px; display: flex; align-items: center; background: #f3f3f3; border-top: 1px solid #c6c6c6; color: #444; }
.status > span { display: flex; align-items: center; gap: 7px; white-space: pre; }
.s-page { padding-left: 8px; width: 66px; }
.s-caps { width: 84px; }
.s-pos { width: 127px; }
.views { margin-left: auto; height: 100%; display: flex; align-items: center; }
.view { width: 38px; height: 100%; display: flex; align-items: center; justify-content: center; }
.view.active { background: #c6c6c6; }
.zoom-btn { width: 8px; display: flex; justify-content: center; }
.views input { appearance: none; width: 100px; height: 12px; margin: 0 3px; background: linear-gradient(#a6a6a6, #a6a6a6) center / 100% 1px no-repeat; }
.views input::-webkit-slider-thumb { appearance: none; width: 5px; height: 11px; background: #666; }
.view + .zoom-btn { margin-left: 4px; }
.pct { margin-left: 11px; width: 46px; }
.fit { margin-right: 17px; display: flex; }

/* taskbar */
.taskbar { flex: none; height: 40px; display: flex; color: #fff; background: linear-gradient(90deg, #3b0c10, #4b0f14 18%, #3b0c10 33%, #3a1013 43%, #552929 58%, #572828 65%, #520f15 76%, #470f14 88%, #3b0c10); }
.task { position: relative; width: 49px; height: 40px; flex: none; display: flex; align-items: center; justify-content: center; }
.task.sys { width: 48px; }
.task.first { margin-left: 2px; }
.task.open { background: linear-gradient(#ffa9b0, #ffa9b0) bottom / 40px 2px no-repeat; }
.task.current { background: linear-gradient(#ffa9b0, #ffa9b0) bottom / 100% 2px no-repeat, #8c2a33; }
.task b { position: absolute; left: 16px; top: 12px; font-size: 12px; line-height: 16px; }
.tray { margin-left: auto; display: flex; align-items: center; }
.power { display: flex; align-items: center; gap: 1px; margin-right: 17px; }
.cell { position: relative; width: 38px; height: 20px; border: 2px solid #fff; outline: 1px solid #222; background: #09c464; font-size: 12px; line-height: 17px; text-align: center; }
.cell i { position: absolute; right: -1px; top: -9px; width: 12px; height: 12px; border-radius: 50%; background: #ff0018; }
.tray .tr { width: 24px; height: 40px; display: flex; align-items: center; justify-content: center; }
.tray .w-people { width: 36px; margin-right: 6px; }
.tray .pen { width: 29px; }
.tray .ime { width: 28px; font-size: 13px; }
.ime span { width: 14px; height: 14px; background: #fff; color: #222; font-size: 12px; line-height: 14px; }
.clock { width: 80px; display: flex; flex-direction: column; align-items: center; line-height: 18px; }
.notice { position: relative; width: 45px; height: 40px; display: flex; align-items: center; justify-content: center; }
.notice svg { margin: 0 12px 3px 0; }
.badge { position: absolute; right: 12px; bottom: 5px; width: 16px; height: 16px; border-radius: 50%; background: #842532; line-height: 16px; }
.peek { width: 5px; height: 40px; border-left: 1px solid #8a6a6c; }
```

FILE: ruler.js
```js
const CM = 37.795;
const NS = "http://www.w3.org/2000/svg";

function add(svg, tag, attrs, text) {
  const node = document.createElementNS(NS, tag);
  for (const key in attrs) node.setAttribute(key, attrs[key]);
  if (text !== undefined) node.textContent = text;
  svg.appendChild(node);
}

function drawRuler(svg, vertical, origin, from, to, cursor) {
  const length = vertical ? svg.clientHeight : svg.clientWidth;
  const rect = (pos, cross, size, depth, fill) => add(svg, "rect", vertical
    ? { x: cross, y: pos, width: depth, height: size, fill }
    : { x: pos, y: cross, width: size, height: depth, fill });

  rect(from, 20, to - from, 4, "#fff");
  rect(0, 19, length, 1, "#c6c6c6");
  rect(0, 24, length, 1, "#c6c6c6");

  const first = Math.ceil((1 - origin) / CM * 10);
  const last = Math.floor((length - 3 - origin) / CM * 10);
  for (let i = first; i <= last; i++) {
    const pos = Math.floor(origin + i * CM / 10);
    const depth = i % 10 === 0 ? 17 : i % 5 === 0 ? 9 : 4;
    rect(pos, 19 - depth, 1, depth, "#505050");
    if (i % 10 === 0) {
      const label = Math.abs(i / 10);
      if (vertical) add(svg, "text", { x: 7, y: pos + 12, "text-anchor": "middle", fill: "#505050" }, label);
      else add(svg, "text", { x: pos + 1, y: 12, fill: "#505050" }, label);
    }
  }
  rect(cursor, 2, 1, 17, "#000");
}

drawRuler(document.getElementById("rulerH"), false, 143, 189, 653, 768);
drawRuler(document.getElementById("rulerV"), true, 57, 76, 106, 204);
```
